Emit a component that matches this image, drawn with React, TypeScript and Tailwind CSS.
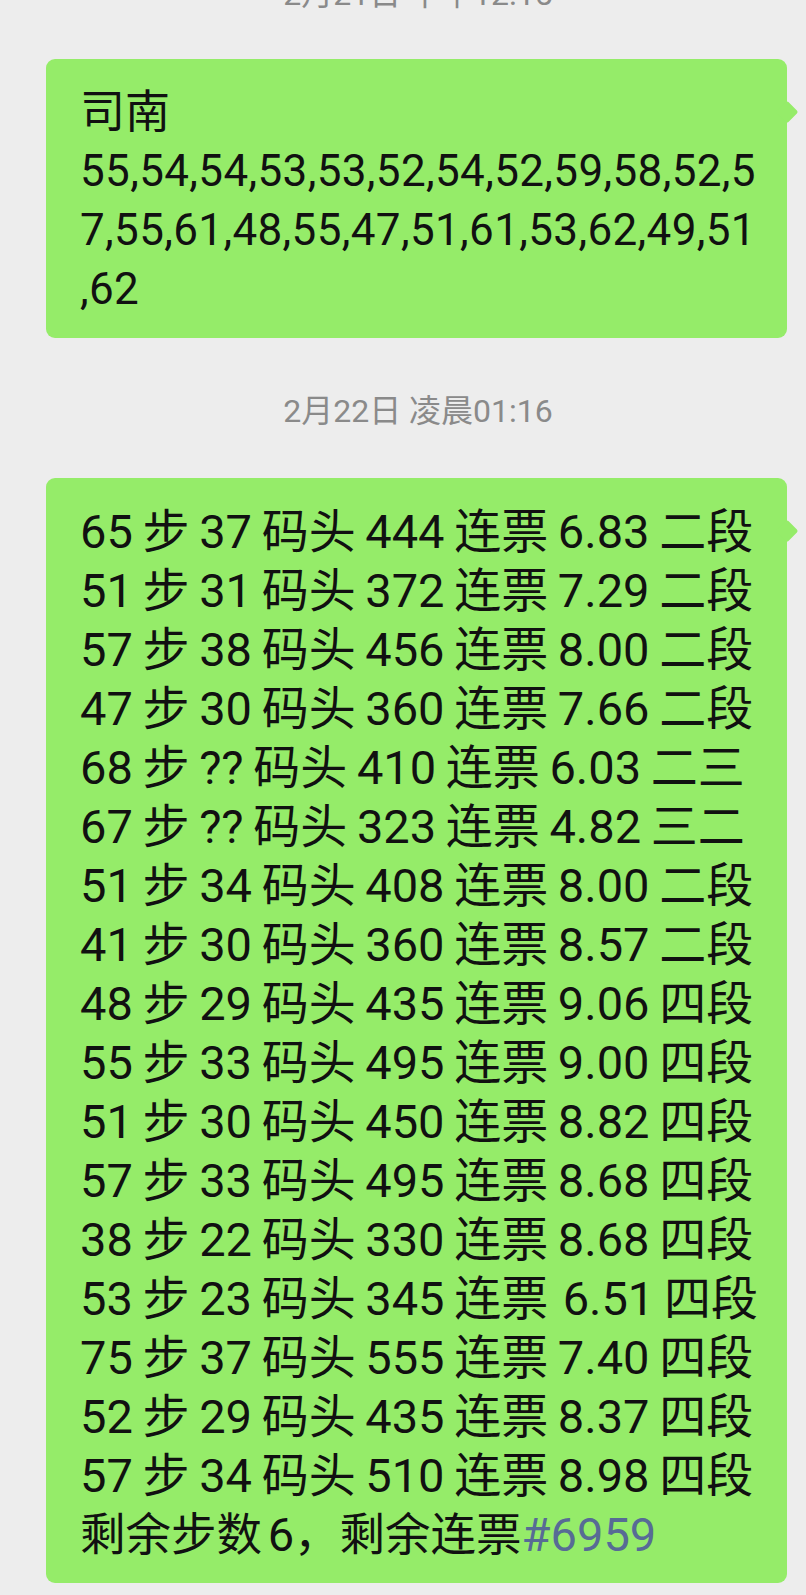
const numberLines = [
  "55,54,54,53,53,52,54,52,59,58,52,5",
  "7,55,61,48,55,47,51,61,53,62,49,51",
  ",62",
];

const rows = [
  "65 步 37 码头 444 连票 6.83 二段",
  "51 步 31 码头 372 连票 7.29 二段",
  "57 步 38 码头 456 连票 8.00 二段",
  "47 步 30 码头 360 连票 7.66 二段",
  "68 步 ?? 码头 410 连票 6.03 二三",
  "67 步 ?? 码头 323 连票 4.82 三二",
  "51 步 34 码头 408 连票 8.00 二段",
  "41 步 30 码头 360 连票 8.57 二段",
  "48 步 29 码头 435 连票 9.06 四段",
  "55 步 33 码头 495 连票 9.00 四段",
  "51 步 30 码头 450 连票 8.82 四段",
  "57 步 33 码头 495 连票 8.68 四段",
  "38 步 22 码头 330 连票 8.68 四段",
  "53 步 23 码头 345 连票 \u200a6.51 四段",
  "75 步 37 码头 555 连票 7.40 四段",
  "52 步 29 码头 435 连票 8.37 四段",
  "57 步 34 码头 510 连票 8.98 四段",
];

function Time({ text }: { text: string }) {
  return (
    <div className="flex h-[40px] items-center justify-center pl-[30px] text-[32px] leading-[40px] text-[#8a8a8a]">
      {text}
    </div>
  );
}

function Bubble({ children }: { children: React.ReactNode }) {
  return (
    <div className="relative ml-[46px] w-[741px] rounded-[9px] bg-[#95ec69] pl-[34px] pr-[10px] pt-[24px] pb-[19px] leading-[59px] text-[#111111]">
      <div className="absolute right-[-8px] top-[45px] h-[16px] w-[16px] rotate-45 rounded-[2px] bg-[#95ec69]" />
      {children}
    </div>
  );
}

export default function App() {
  return (
    <div
      className="h-[1595px] overflow-hidden bg-[#ededed]"
      style={{ fontFamily: 'Roboto, "Noto Sans CJK SC", sans-serif' }}
    >
      <div className="-mt-[26px]">
        <Time text="2月21日 中午12:15" />
      </div>

      <div className="mt-[45px]">
        <Bubble>
          <div className="h-[59px] text-[45px]">司南</div>
          {numberLines.map((line) => (
            <div key={line} className="h-[59px] whitespace-pre text-[44px] tracking-[0.35px]">
              {line}
            </div>
          ))}
        </Bubble>
      </div>

      <div className="mt-[53px]">
        <Time text="2月22日 凌晨01:16" />
      </div>

      <div className="mt-[47px]">
        <Bubble>
          {rows.map((row, i) => (
            <div key={i} className="h-[59px] whitespace-pre text-[47px] [word-spacing:-2px]">
              {row}
            </div>
          ))}
          <div className="h-[59px] whitespace-pre text-[47px] [word-spacing:-6px]">
            <span className="text-[45.5px]">剩余步数</span> 6
            <span className="text-[45.5px]">，剩余连票</span>
            <span className="text-[#576b95]">#6959</span>
          </div>
        </Bubble>
      </div>
    </div>
  );
}
